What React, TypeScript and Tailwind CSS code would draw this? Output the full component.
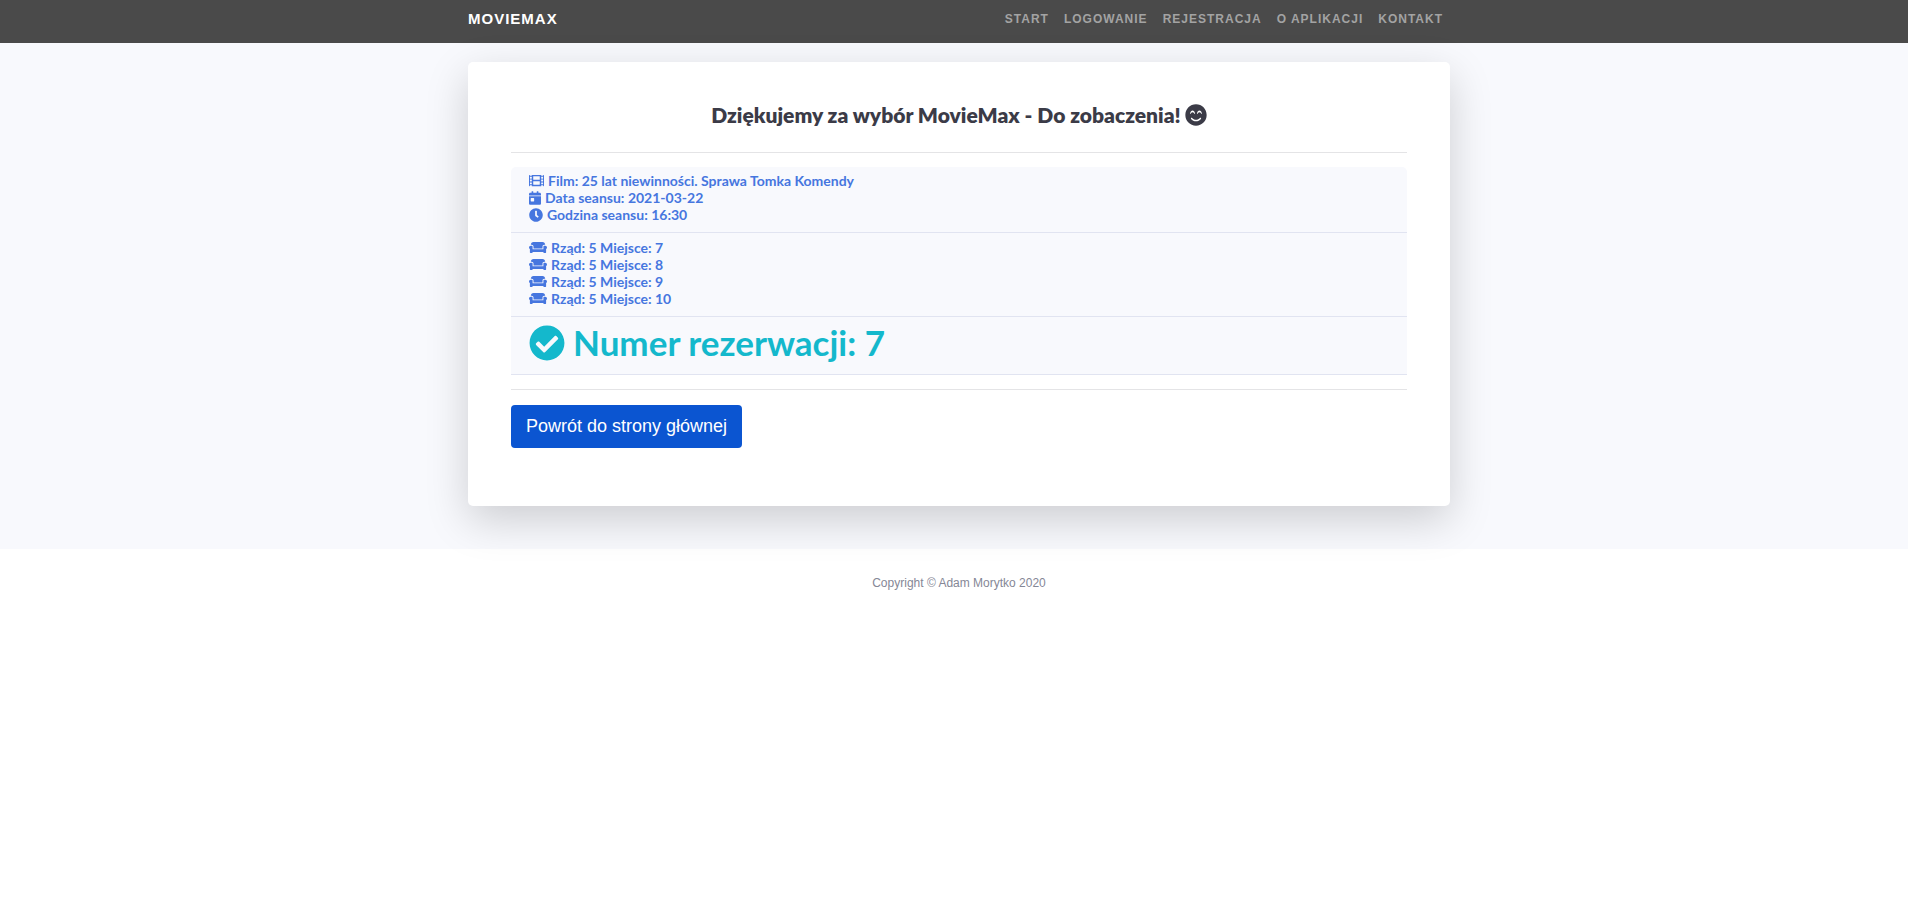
import { FaFilm, FaCalendarDay, FaClock, FaCouch, FaCheckCircle, FaSmileBeam } from "react-icons/fa";

const links = ["Start", "Logowanie", "Rejestracja", "O aplikacji", "Kontakt"];
const seats = [7, 8, 9, 10];

export default function App() {
  return (
    <div className="font-['Liberation_Sans',Arial,sans-serif]">
      <header className="h-[43px] bg-[#4a4a4a] pl-[10px]">
        <nav className="mx-auto flex h-[38px] max-w-[982px] items-center justify-between font-bold uppercase">
          <a href="#" className="text-[15px] tracking-[1px] text-white">MovieMax</a>
          <ul className="flex gap-[15px] pr-[7px] text-[12px] tracking-[1px] text-[#a3a3a3]">
            {links.map((l) => (
              <li key={l}><a href="#">{l}</a></li>
            ))}
          </ul>
        </nav>
      </header>
      <main className="bg-[#f8f9fd] pt-[19px] pb-[43px] pl-[10px]">
        <section className="mx-auto max-w-[982px] rounded-[5px] bg-white px-[43px] pt-[36px] pb-[58px] shadow-[0_14px_43px_rgba(0,0,0,0.175)]">
          <h1 className="flex h-[34px] items-center justify-center gap-1 font-['Lato',sans-serif] text-[21px] font-extrabold text-[#3b3b47]">
            Dziękujemy za wybór MovieMax - Do zobaczenia!
            <FaSmileBeam className="size-[22px]" />
          </h1>
          <hr className="mt-[20px] mb-[14px] border-[#e4e4e6]" />
          <div className="rounded-t-[5px] bg-[#f8f9fd] font-['Lato',sans-serif] font-bold">
            <div className="border-b border-[#e1e4f1] px-[18px] pt-[5px] pb-[9px] text-[14px] leading-[17px] text-[#4676df]">
              <p className="flex items-center gap-1"><FaFilm className="size-[15px]" />Film: 25 lat niewinności. Sprawa Tomka Komendy</p>
              <p className="flex items-center gap-1"><FaCalendarDay className="w-[12px]" />Data seansu: 2021-03-22</p>
              <p className="flex items-center gap-1"><FaClock />Godzina seansu: 16:30</p>
            </div>
            <ul className="border-b border-[#e1e4f1] px-[18px] pt-[6px] pb-[9px] text-[14px] leading-[17px] text-[#4676df]">
              {seats.map((s) => (
                <li key={s} className="flex items-center gap-1"><FaCouch className="h-[15px] w-[18px]" />Rząd: 5 Miejsce: {s}</li>
              ))}
            </ul>
            <p className="flex h-[58px] items-center gap-2 border-b border-[#e1e4f1] px-[18px] pb-[6px] text-[35px] text-[#14b8cc]">
              <FaCheckCircle className="size-[36px]" />Numer rezerwacji: 7
            </p>
          </div>
          <hr className="mt-[14px] mb-[15px] border-[#e4e4e6]" />
          <button type="button" className="h-[43px] rounded-[4px] bg-[#0b55d1] px-[15px] text-[18px] text-white">
            Powrót do strony głównej
          </button>
        </section>
      </main>
      <footer className="pt-[25px] pl-[10px] text-center text-[12px] leading-[18px] text-[#858796]">
        Copyright © Adam Morytko 2020
      </footer>
    </div>
  );
}
